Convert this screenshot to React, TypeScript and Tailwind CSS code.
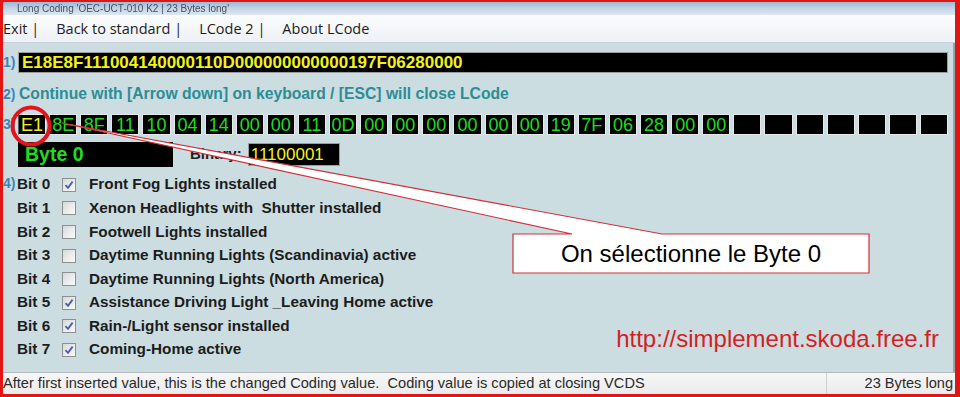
const hexValues = [
  'E1', '8E', '8F', '11', '10', '04', '14', '00', '00', '11', '0D', '00', '00', '00', '00',
  '00', '00', '19', '7F', '06', '28', '00', '00', '', '', '', '', '', '', '',
]

const bits = [
  { label: 'Front Fog Lights installed', on: true },
  { label: 'Xenon Headlights with  Shutter installed', on: false },
  { label: 'Footwell Lights installed', on: false },
  { label: 'Daytime Running Lights (Scandinavia) active', on: false },
  { label: 'Daytime Running Lights (North America)', on: false },
  { label: 'Assistance Driving Light _Leaving Home active', on: true },
  { label: 'Rain-/Light sensor installed', on: true },
  { label: 'Coming-Home active', on: true },
]

function CheckBox({ checked }: { checked: boolean }) {
  return (
    <span className="flex h-[14px] w-[14px] items-center justify-center border border-[#8e8f8f] bg-gradient-to-br from-[#d6d9dc] to-[#fbfbfb]">
      {checked && (
        <svg width="10" height="10" viewBox="0 0 10 10">
          <path d="M1.5 5.2 L4 7.8 L8.6 1.6" fill="none" stroke="#4b5ea8" strokeWidth="1.8" />
        </svg>
      )}
    </span>
  )
}

function StepLabel({ n }: { n: number }) {
  return (
    <span className="w-[15px] shrink-0 overflow-hidden whitespace-nowrap text-right pr-[3px] text-[14px] font-bold text-[#3a86b8]">
      {n})
    </span>
  )
}

export default function App() {
  return (
    <div className="relative h-[397px] w-[960px] overflow-hidden border-t-[2px] border-l-[3px] border-r-[5px] border-b-[3px] border-[#e21515] font-['Liberation_Sans',Arial,sans-serif]">
      {/* window title */}
      <div className="flex h-[13px] items-center overflow-hidden bg-gradient-to-b from-[#9fb9d3] via-[#c3d5e6] to-[#dfe8f1]">
        <span className="pl-[14px] text-[10px] leading-[13px] text-[#4a5058] blur-[0.4px]">
          Long Coding 'OEC-UCT-010 K2 | 23 Bytes long'
        </span>
      </div>

      {/* menu */}
      <div className="flex h-[28px] items-center gap-[17px] border-b border-[#c9d2dc] bg-gradient-to-b from-[#fbfcfd] to-[#eef1f5] font-['Open_Sans',sans-serif] text-[14.5px] text-[#1e1e1e]">
        <span>Exit |</span>
        <span>Back to standard |</span>
        <span>LCode 2 |</span>
        <span>About LCode</span>
      </div>

      <div className="flex h-[329px] border-r-2 border-[#9aa4ac]">
        <div className="flex flex-1 flex-col bg-[#cbdde1]">
          {/* 1) full coding */}
          <div className="mt-[9px] flex items-center">
            <StepLabel n={1} />
            <div className="flex h-[21px] w-[930px] items-center border border-[#9c9c9c] bg-black pl-[3px] text-[17px] font-bold leading-none text-[#f2f21c]">
              E18E8F111004140000110D000000000000197F06280000
            </div>
          </div>

          {/* 2) hint */}
          <div className="mt-[12px] flex h-[18px] items-center whitespace-nowrap text-[15.7px] font-bold text-[#2b8d96]">
            <span className="w-[12px] overflow-hidden text-right text-[14px] text-[#3a86b8]">2)</span>
            <span className="pl-[4px]">Continue with [Arrow down] on keyboard / [ESC] will close LCode</span>
          </div>

          {/* 3) bytes */}
          <div className="mt-[11px] flex items-center">
            <StepLabel n={3} />
            <div className="grid w-[930px] grid-cols-[repeat(30,minmax(0,1fr))] gap-[3px]">
              {hexValues.map((v, i) => (
                <div
                  key={i}
                  className={`flex h-[21px] items-center justify-center border border-[#e4e8e8] bg-black text-[18px] leading-none ${
                    i === 0 ? 'border-l-[#5a5a5a] text-[#f0ee1e]' : 'text-[#1fdc1f]'
                  }`}
                >
                  {v}
                </div>
              ))}
            </div>
          </div>

          <div className="mt-[7px] flex items-center">
            <span className="w-[15px] shrink-0" />
            <div className="flex h-[25px] w-[155px] items-center bg-black pl-[7px] text-[19.5px] font-bold text-[#20dd20]">
              Byte 0
            </div>
            <span className="ml-[17px] text-[15px] font-bold text-[#222]">Binary:</span>
            <div className="ml-[6px] flex h-[23px] w-[92px] items-center border border-[#9c9c9c] bg-black pl-[2px] text-[17px] text-[#f2f21c]">
              11100001
            </div>
          </div>

          {/* 4) bits */}
          <div className="mt-[6px] flex items-end justify-between pr-[14px]">
            <div className="flex">
              <span className="w-[12px] overflow-hidden text-right text-[14px] font-bold leading-[20px] text-[#3a86b8]">4)</span>
              <div className="flex flex-col pl-[2px]">
                {bits.map((b, i) => (
                  <div key={i} className="flex h-[23.6px] items-center text-[15.3px] font-bold text-[#1c1c1c]">
                    <span className="w-[45px]">Bit {i}</span>
                    <CheckBox checked={b.on} />
                    <span className="ml-[13px] whitespace-pre">{b.label}</span>
                  </div>
                ))}
              </div>
            </div>
            <span className="mb-[11px] text-[24px] leading-none text-[#d41f24]">http://simplement.skoda.free.fr</span>
          </div>
        </div>
      </div>

      {/* status bar */}
      <div className="flex h-[22px] items-center border-t border-[#b3b8bd] bg-gradient-to-b from-[#f7f7f7] to-[#ebebeb] text-[14.6px] text-[#2a2a2a]">
        <span className="flex-1 whitespace-nowrap">After first inserted value, this is the changed Coding value.&nbsp; Coding value is copied at closing VCDS</span>
        <span className="flex h-full w-[129px] items-center justify-end border-l border-[#d0d0d0] pr-[2px]">23 Bytes long</span>
      </div>

      {/* annotation */}
      <svg className="pointer-events-none absolute left-[-3px] top-[-2px]" width="960" height="397" viewBox="0 0 960 397">
        <path
          d="M62 123 L662 234 L869 234 L869 273 L513 273 L513 234 L572 234 Z"
          fill="white"
          stroke="#d0303a"
          strokeWidth="1.2"
        />
        <circle cx="31" cy="126" r="18.5" fill="none" stroke="#e3141a" strokeWidth="4" />
      </svg>
      <div className="pointer-events-none absolute left-[510px] top-[232px] flex h-[39px] w-[356px] items-center justify-center text-[24px] text-black">
        On sélectionne le Byte 0
      </div>
    </div>
  )
}
